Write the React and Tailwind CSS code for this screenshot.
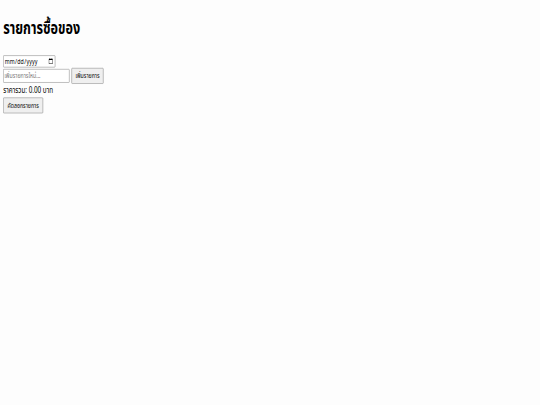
import { useState } from "react";

const App = () => {
  const [items, setItems] = useState([]);
  const [newItem, setNewItem] = useState("");

  const total = items.reduce((sum, item) => sum + item.price, 0);

  // Add a new item to the list
  const addItem = () => {
    if (!newItem.trim()) return;
    setItems((prev) => [...prev, { name: newItem, price: 0 }]);
    setNewItem("");
  };

  return (
    <div className="h-screen w-screen overflow-hidden bg-[#fdfdfd]">
      {/* page is drawn at desktop size, then squeezed into the small window */}
      <div className="origin-top-left scale-x-[0.395] scale-y-[0.527] w-[1366px] p-[8px] text-black text-[16px] font-['Noto_Sans_Thai','Noto_Sans',sans-serif]">
        <h1 className="mt-[24px] mb-[26px] text-[32px] leading-[46px] font-bold">รายการซื้อของ</h1>

        <div className="h-[25px]">
          <input
            type="date"
            className="h-[23px] w-[132px] px-[2px] py-[1px] text-[13.33px] border border-[#767676] rounded-[2px] bg-white"
          />
        </div>

        <div className="flex flex-row items-center gap-[5px]">
          <input
            type="text"
            placeholder="เพิ่มรายการใหม่..."
            value={newItem}
            onChange={(e) => setNewItem(e.target.value)}
            className="h-[26px] w-[168px] px-[2px] py-[1px] text-[13.33px] border border-[#767676] rounded-[2px] bg-white placeholder:text-[#757575]"
          />
          <button
            onClick={addItem}
            className="h-[30px] w-[81px] px-[6px] text-[13.33px] border border-[#767676] rounded-[2px] bg-[#efefef]"
          >
            เพิ่มรายการ
          </button>
        </div>

        <div className="leading-[26px]">ราคารวม: {total.toFixed(2)} บาท</div>

        <button
          onClick={() => setItems([])}
          className="h-[30px] w-[101px] px-[6px] text-[13.33px] border border-[#767676] rounded-[2px] bg-[#efefef]"
        >
          คัดลอกรายการ
        </button>
      </div>
    </div>
  );
};

export default App;
